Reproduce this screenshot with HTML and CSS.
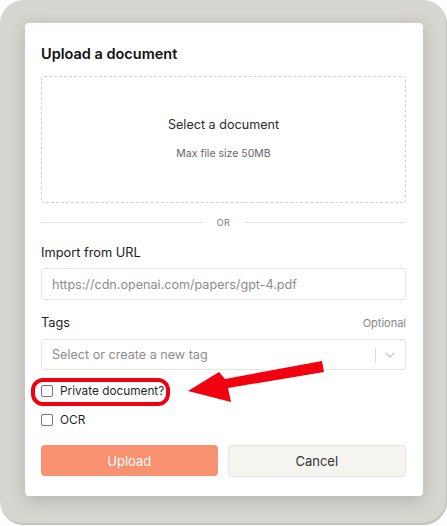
FILE: index.html
```html
<!DOCTYPE html>
<html>
<head>
<meta charset="utf-8">
<link rel="stylesheet" href="styles.css">
</head>
<body>
<div class="frame">
  <div class="card">
    <h1 class="title">Upload a document</h1>
    <div class="dropzone">
      <div class="drop-title">Select a document</div>
      <div class="drop-sub">Max file size 50MB</div>
    </div>
    <div class="divider"><span class="line"></span><span class="or">OR</span><span class="line"></span></div>
    <div class="label">Import from URL</div>
    <div class="input"><span class="placeholder">https://cdn.openai.com/papers/gpt-4.pdf</span></div>
    <div class="label-row"><span class="label">Tags</span><span class="optional">Optional</span></div>
    <div class="select">
      <span class="placeholder">Select or create a new tag</span>
      <span class="sep"></span>
      <svg class="chev" width="10" height="6" viewBox="0 0 10 6"><path d="M1 1 L5 5 L9 1" fill="none" stroke="#c7c7c7" stroke-width="1.3"/></svg>
    </div>
    <div class="check-row first"><span class="box"></span><span class="check-label">Private document?</span>
      <span class="highlight"></span>
    </div>
    <div class="check-row"><span class="box"></span><span class="check-label">OCR</span></div>
    <div class="buttons">
      <div class="btn primary">Upload</div>
      <div class="btn secondary">Cancel</div>
    </div>
  </div>
  <svg class="arrow" width="447" height="526" viewBox="0 0 447 526">
    <polygon points="188,391 231,402 228,388 324,372 322,361 225,379 219,372" fill="#f2000f" stroke="#ffffff" stroke-width="4" stroke-linejoin="round" paint-order="stroke"/>
  </svg>
</div>
</body>
</html>
```
FILE: styles.css
```css
* { box-sizing: border-box; }
html, body { margin: 0; padding: 0; background: #ffffff; }
body { font-family: Inter, "Liberation Sans", sans-serif; color: #1f1f1f; }
.frame {
  position: relative;
  width: 447px;
  height: 525px;
  background: #d6d5d0;
  border-radius: 24px;
  box-shadow: inset -1px -2px 0 #c4c3be;
  padding: 23px 24px 0 25px;
}
.card {
  width: 398px;
  height: 473px;
  background: #fff;
  border-radius: 4px;
  box-shadow: 0 4px 18px rgba(0,0,0,0.16);
  padding: 18px 17px 0 16px;
  display: flex;
  flex-direction: column;
}
.title { margin: 0; font-size: 14.5px; font-weight: 600; line-height: 26px; color: #111; }
.dropzone {
  margin-top: 9px;
  height: 127px;
  border: 1px dashed #d2d2d2;
  border-radius: 3px;
  display: flex;
  flex-direction: column;
  align-items: center;
  justify-content: center;
}
.drop-title { font-size: 12.6px; color: #2b2b2b; margin-top: -3px; }
.drop-sub { font-size: 10.5px; color: #666; margin-top: 15px; }
.divider { display: flex; align-items: center; height: 38px; gap: 14px; }
.divider .line { flex: 1; height: 1px; background: #e4e3df; }
.divider .or { font-size: 9px; color: #777; letter-spacing: 0.3px; }
.label { font-size: 12.8px; color: #222; line-height: 18px; }
.divider + .label { margin-top: 3px; }
.input, .select {
  height: 32px;
  border: 1px solid #e4e2da;
  border-radius: 4px;
  display: flex;
  align-items: center;
  padding-left: 10px;
  margin-top: 6px;
}
.placeholder { font-size: 12.6px; color: #8d8d8d; }
.label-row { display: flex; justify-content: space-between; align-items: baseline; margin-top: 14px; }
.optional { font-size: 11px; color: #888; }
.select { margin-top: 7px; height: 31px; }
.select .placeholder { flex: 1; }
.sep { width: 1px; height: 16px; background: #ddd; }
.chev { margin: 0 10px 0 9px; }
.check-row { position: relative; display: flex; align-items: center; height: 20px; gap: 7px; }
.check-row.first { margin-top: 11px; }
.check-row + .check-row { margin-top: 9px; }
.box { width: 12px; height: 12px; border: 1px solid #777; border-radius: 2px; background: #fff; }
.check-label { font-size: 11.8px; color: #1f1f1f; }
.highlight {
  position: absolute;
  left: -10px;
  top: -3px;
  width: 139px;
  height: 28px;
  border: 4px solid #f2000f;
  border-radius: 12px;
  box-shadow: 0 0 0 1.5px #fff, inset 0 0 0 1px #fff;
}
.buttons { display: flex; gap: 10px; margin-top: 15px; }
.btn {
  flex: 1;
  height: 32px;
  border-radius: 4px;
  display: flex;
  align-items: center;
  justify-content: center;
  font-size: 13px;
}
.primary { background: #f7916f; color: #fff; height: 31px; }
.secondary { background: #f6f4ee; border: 1px solid #e5e3dc; color: #333; }
.arrow { position: absolute; left: 0; top: 0; pointer-events: none; }
```
